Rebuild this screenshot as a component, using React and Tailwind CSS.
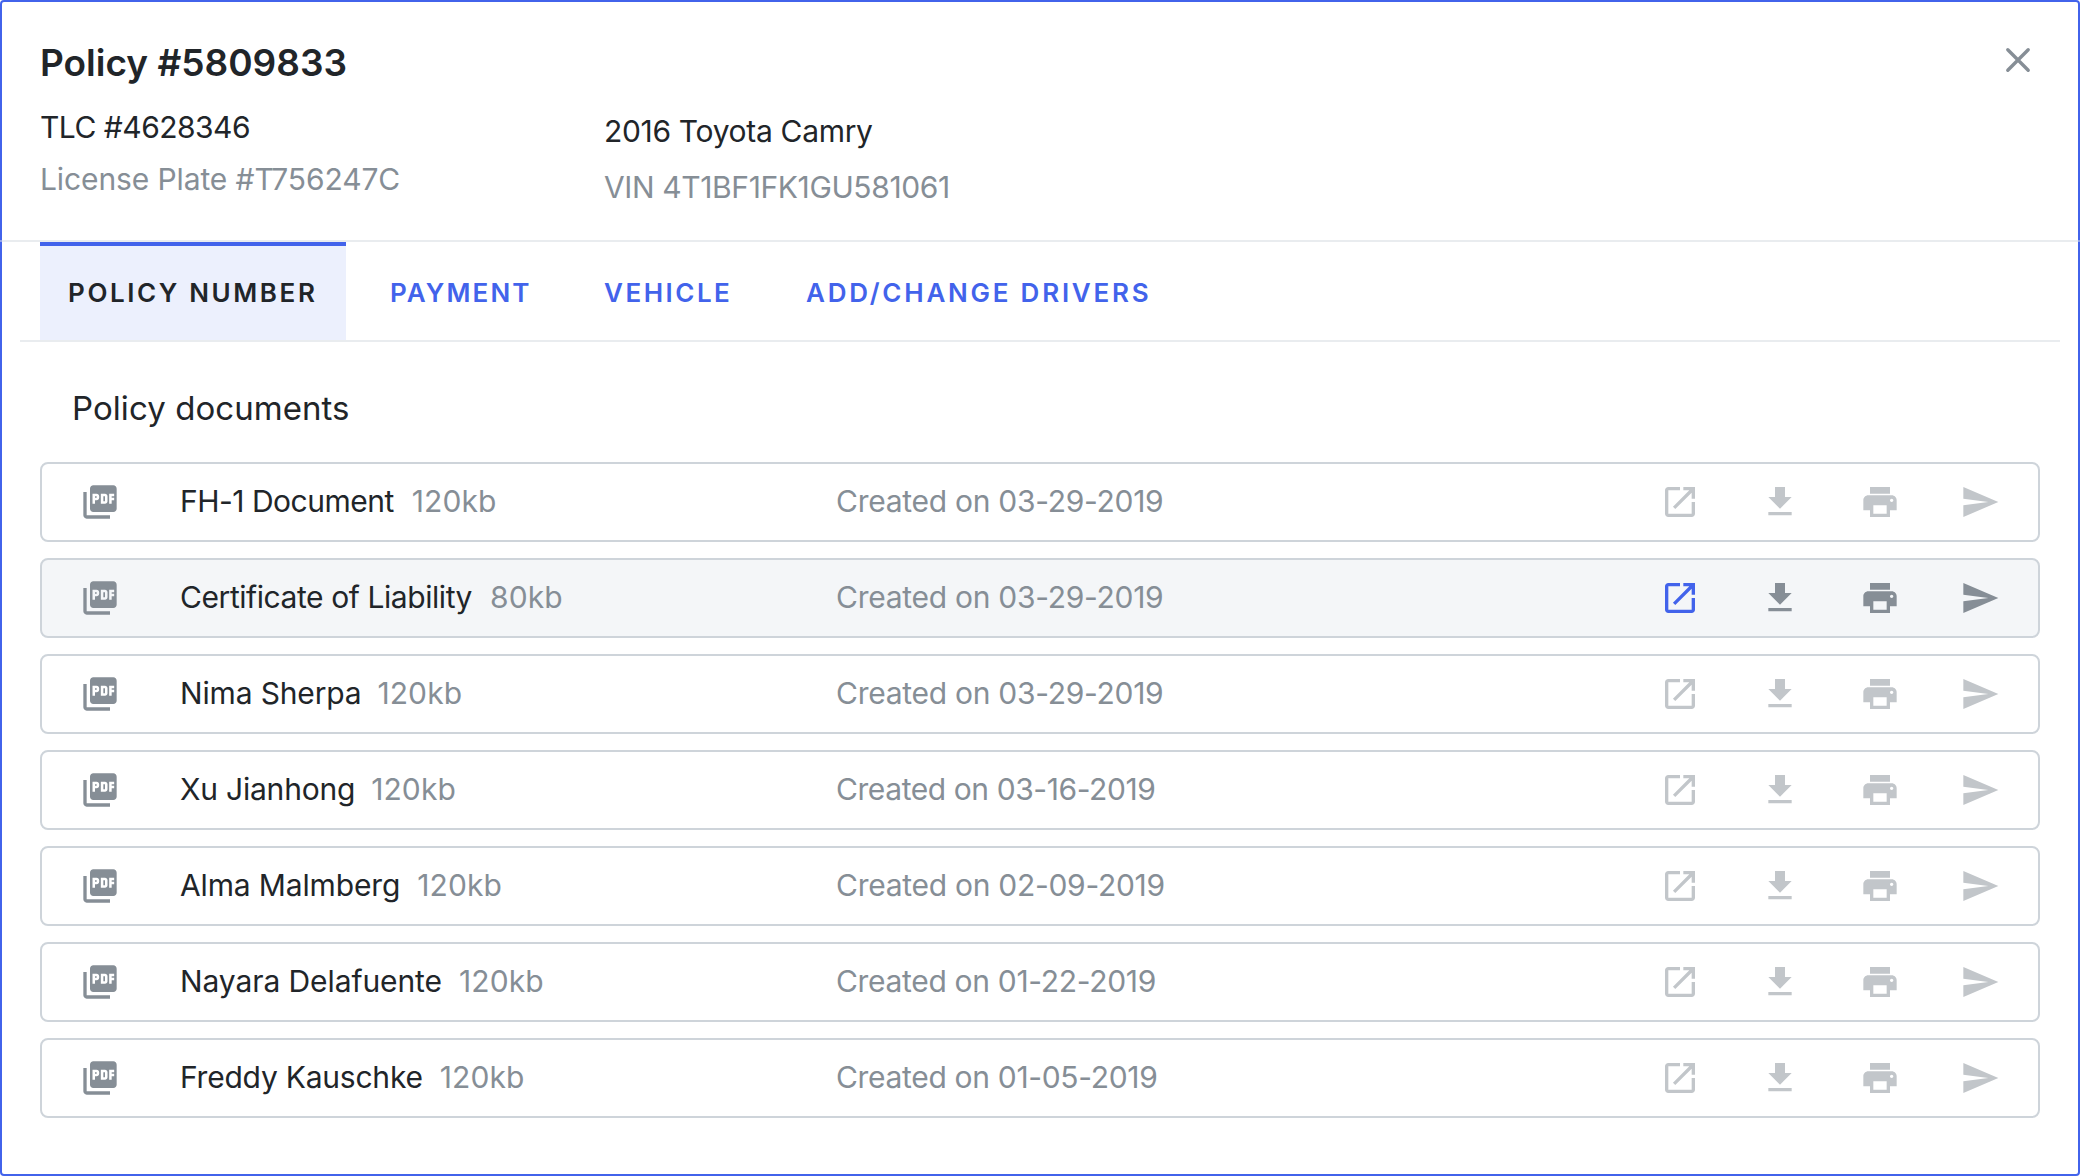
import React from "react";

const ICONS = {
  pdf: "M20 2H8c-1.100 0-2 .9-2 2v12c0 1.100.9 2 2 2h12c1.100 0 2-.9 2-2V4c0-1.100-.9-2-2-2zm-8.500 7.500c0 .83-.67 1.500-1.500 1.500H9v2H7.500V7H10c.83 0 1.500.67 1.500 1.500v1zm5 2c0 .83-.67 1.500-1.500 1.500h-2.500V7H15c.83 0 1.500.67 1.500 1.500v3zm4-3H19v1h1.500V11H19v2h-1.500V7h3v1.500zM9 9.500h1v-1H9v1zM4 6H2v14c0 1.100.9 2 2 2h14v-2H4V6zm10 5.500h1v-3h-1v3z",
  open: "M19 19H5V5h7V3H5c-1.110 0-2 .9-2 2v14c0 1.100.89 2 2 2h14c1.100 0 2-.9 2-2v-7h-2v7zM14 3v2h3.590l-9.830 9.830 1.410 1.410L19 6.410V10h2V3h-7z",
  download: "M19 9h-4V3H9v6H5l7 7 7-7zM5 18v2h14v-2H5z",
  print: "M19 8H5c-1.660 0-3 1.340-3 3v6h4v4h12v-4h4v-6c0-1.660-1.340-3-3-3zm-3 11H8v-5h8v5zm3-7c-.55 0-1-.45-1-1s.45-1 1-1 1 .45 1 1-.45 1-1 1zm-1-9H6v4h12V3z",
  send: "M2.010 21L23 12 2.010 3 2 10l15 2-15 2z",
};

function Icon({ name, className = "" }) {
  return (
    <svg viewBox="0 0 24 24" fill="currentColor" className={`size-10 shrink-0 ${className}`}>
      <path d={ICONS[name]} />
    </svg>
  );
}

const TABS = [
  { label: "PAYMENT", track: "tracking-[2.12px]", box: "w-[214px]" },
  { label: "VEHICLE", track: "tracking-[2.5px]", box: "w-[202px]" },
  { label: "ADD/CHANGE DRIVERS", track: "tracking-[2.76px]", box: "" },
];

const DOCS = [
  { name: "FH-1 Document", size: "120kb", date: "03-29-2019", nameTrack: "tracking-[-0.5px]", dateTrack: "tracking-[-0.28px]", gap: "ml-[18px]" },
  { name: "Certificate of Liability", size: "80kb", date: "03-29-2019", nameTrack: "tracking-[-0.43px]", dateTrack: "tracking-[-0.28px]", gap: "ml-[18px]", active: true },
  { name: "Nima Sherpa", size: "120kb", date: "03-29-2019", nameTrack: "tracking-[-0.16px]", dateTrack: "tracking-[-0.28px]", gap: "ml-[16px]" },
  { name: "Xu Jianhong", size: "120kb", date: "03-16-2019", nameTrack: "tracking-[-0.21px]", dateTrack: "tracking-[-0.42px]", gap: "ml-[16px]" },
  { name: "Alma Malmberg", size: "120kb", date: "02-09-2019", nameTrack: "tracking-[-0.14px]", dateTrack: "tracking-[-0.28px]", gap: "ml-[17px]" },
  { name: "Nayara Delafuente", size: "120kb", date: "01-22-2019", nameTrack: "tracking-[-0.09px]", dateTrack: "tracking-[-0.32px]", gap: "ml-[17px]" },
  { name: "Freddy Kauschke", size: "120kb", date: "01-05-2019", nameTrack: "tracking-[-0.22px]", dateTrack: "tracking-[-0.32px]", gap: "ml-[17px]" },
];

function DocumentRow({ doc }) {
  const idle = doc.active ? "text-[#868e96]" : "text-[#c2c6ca]";
  return (
    <li
      className={`flex h-20 items-center rounded-lg border-2 border-[#ced4da] pl-[38px] pr-[38px] ${
        doc.active ? "bg-[#f4f6f8]" : "bg-white"
      }`}
    >
      <Icon name="pdf" className="text-[#868e96]" />
      <div className="ml-[60px] flex w-[656px] pb-0.5 text-[30px] leading-10">
        <span className={doc.nameTrack}>{doc.name}</span>
        <span className={`text-[#868e96] tracking-[0.1px] ${doc.gap}`}>{doc.size}</span>
      </div>
      <div className={`grow pb-0.5 text-[30px] leading-10 text-[#868e96] ${doc.dateTrack}`}>
        Created on {doc.date}
      </div>
      <div className={`flex gap-[60px] ${idle}`}>
        <Icon name="open" className={doc.active ? "text-[#4263eb]" : ""} />
        <Icon name="download" />
        <Icon name="print" />
        <Icon name="send" />
      </div>
    </li>
  );
}

export default function App() {
  return (
    <div className="flex h-[1176px] w-[2080px] flex-col whitespace-nowrap rounded border-2 border-[#4263eb] bg-white font-['Inter',sans-serif] text-[#212529]">
      <header className="flex h-[238px] shrink-0 items-start pl-[38px]">
        <div className="w-[564px] pt-[37px]">
          <h1 className="text-[37px] font-semibold leading-[48px]">Policy #5809833</h1>
          <p className="mt-[20px] text-[30px] leading-10 tracking-[-0.51px]">TLC #4628346</p>
          <p className="mt-3 text-[30px] leading-10 tracking-[-0.11px] text-[#868e96]">License Plate #T756247C</p>
        </div>
        <div className="grow pt-[109px]">
          <p className="text-[30px] leading-10 tracking-[-0.32px]">2016 Toyota Camry</p>
          <p className="mt-4 text-[30px] leading-10 tracking-[-0.38px] text-[#868e96]">VIN 4T1BF1FK1GU581061</p>
        </div>
        <button className="mr-[40px] mt-[38px] text-[#868e96]" aria-label="Close">
          <svg viewBox="0 0 40 40" className="size-10" fill="none" stroke="currentColor" strokeWidth="3.400">
            <path d="M9.800 9.800l20.400 20.400M30.200 9.800l-20.400 20.400" strokeLinecap="round" />
          </svg>
        </button>
      </header>
      <div className="-mx-0.5 flex h-0.5 shrink-0 justify-between bg-[#e9ecef]">
        <span className="w-0.5 bg-[#8fa2ec]" />
        <span className="w-0.5 bg-[#8fa2ec]" />
      </div>
      <nav className="mx-[18px] flex h-[100px] shrink-0 border-b-2 border-[#e9ecef] pl-5 text-[26px] font-semibold leading-8 text-[#4263eb]">
        <div className="mr-[44px] h-[98px] w-[306px] border-t-4 border-[#4263eb] bg-[#ecf0fd] pl-7 pt-[31px] tracking-[2.61px] text-[#212529]">
          POLICY NUMBER
        </div>
        {TABS.map((t) => (
          <div key={t.label} className={`pt-[35px] ${t.track} ${t.box}`}>
            {t.label}
          </div>
        ))}
      </nav>
      <main className="px-[38px]">
        <h2 className="ml-8 mt-[44px] text-[33px] leading-[44px] tracking-[0.06px]">Policy documents</h2>
        <ul className="mt-8 flex flex-col gap-4">
          {DOCS.map((d) => (
            <DocumentRow key={d.name} doc={d} />
          ))}
        </ul>
      </main>
    </div>
  );
}
